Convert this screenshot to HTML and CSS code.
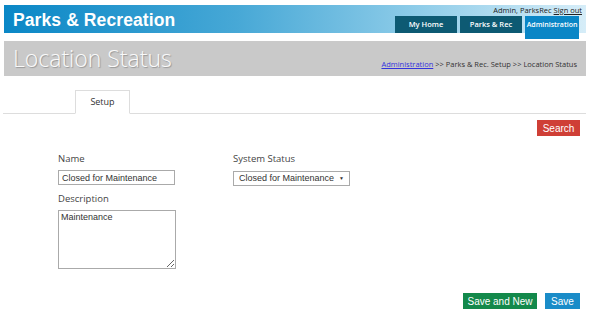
FILE: index.html
```html
<!DOCTYPE html>
<html lang="en">
<head>
  <meta charset="UTF-8">
  <title>Location Status</title>
  <link rel="stylesheet" href="styles.css">
</head>
<body>
  <div class="page">

    <div class="topbar">
      <div class="brand">Parks &amp; Recreation</div>
      <div class="topbar-right">
        <div class="user-line">Admin, ParksRec <a href="#">Sign out</a></div>
        <div class="nav">
          <a class="nav-tab" href="#">My Home</a>
          <a class="nav-tab" href="#">Parks &amp; Rec</a>
          <a class="nav-tab active" href="#">Administration</a>
        </div>
      </div>
    </div>

    <div class="titlebar">
      <h1>Location Status</h1>
      <div class="breadcrumb"><a href="#">Administration</a> &gt;&gt; Parks &amp; Rec. Setup &gt;&gt; Location Status</div>
    </div>

    <div class="tabs">
      <div class="tab">Setup</div>
    </div>

    <div class="toolbar">
      <button class="btn btn-red">Search</button>
    </div>

    <div class="form">
      <div class="form-col">
        <label>Name</label>
        <input type="text" value="Closed for Maintenance">
        <label class="gap">Description</label>
        <textarea>Maintenance</textarea>
      </div>
      <div class="form-col">
        <label>System Status</label>
        <div class="select">Closed for Maintenance <span class="arrow">&#9660;</span></div>
      </div>
    </div>

    <div class="footer-buttons">
      <button class="btn btn-green">Save and New</button>
      <button class="btn btn-blue">Save</button>
    </div>

  </div>
</body>
</html>
```

FILE: styles.css
```css
body {
  margin: 0;
  font-family: 'Open Sans', sans-serif;
  color: #333;
  background: #fff;
}

.page {
  padding: 5px 3px 0 4px;
}

.topbar {
  height: 28px;
  display: flex;
  justify-content: space-between;
  align-items: flex-start;
  background: linear-gradient(to right, #0a87c6, #47a8d6 40%, #8ccbe8 70%, #d6edf8);
}

.brand {
  font-family: 'Liberation Sans', Arial, sans-serif;
  font-weight: bold;
  font-size: 17.5px;
  color: #fff;
  padding: 5px 0 0 9px;
  letter-spacing: 0.1px;
}

.topbar-right {
  display: flex;
  flex-direction: column;
  align-items: flex-end;
  padding-right: 7px;
}

.user-line {
  height: 11px;
  font-size: 7.5px;
  line-height: 11px;
  color: #222;
  margin-right: -3px;
}

.user-line a {
  color: #222;
}

.nav {
  display: flex;
  gap: 3px;
  align-items: flex-start;
}

.nav-tab {
  display: block;
  width: 62px;
  height: 17px;
  line-height: 17px;
  text-align: center;
  font-size: 7.5px;
  font-weight: 600;
  color: #fff;
  text-decoration: none;
  background: #0d5a73;
  box-sizing: border-box;
  white-space: nowrap;
}

.nav-tab.active {
  width: 54px;
  height: 23px;
  background: #0a86c6;
  font-size: 7px;
}

.titlebar {
  margin-top: 8px;
  height: 35px;
  background: #c9c9c9;
  display: flex;
  justify-content: space-between;
  align-items: flex-end;
}

.titlebar h1 {
  margin: 0 0 5px 9px;
  font-weight: 300;
  font-size: 23px;
  line-height: 26px;
  color: #fafafa;
  text-shadow: 1px 1px 1px rgba(0, 0, 0, 0.25);
}

.breadcrumb {
  font-size: 7.5px;
  color: #333;
  margin: 0 9px 7px 0;
}

.breadcrumb a {
  color: #3333dd;
}

.tabs {
  margin: 14px 0 0 -1px;
  border-bottom: 1px solid #ddd;
  display: flex;
}

.tab {
  margin-left: 72px;
  width: 55px;
  height: 24px;
  line-height: 22px;
  border: 1px solid #ddd;
  border-bottom: 1px solid #fff;
  margin-bottom: -1px;
  background: #fff;
  text-align: center;
  font-size: 9px;
  box-sizing: border-box;
}

.toolbar {
  display: flex;
  justify-content: flex-end;
  padding: 6px 6px 0 0;
}

.btn {
  border: none;
  color: #fff;
  font-family: 'Liberation Sans', Arial, sans-serif;
  font-size: 10px;
  height: 16px;
  padding: 0;
  white-space: nowrap;
  cursor: pointer;
}

.btn-red {
  background: #cf3f36;
  width: 43px;
}

.btn-green {
  background: #13894b;
  width: 74px;
}

.btn-blue {
  background: #1a8cc8;
  width: 35px;
}

.form {
  display: flex;
  padding: 17px 0 0 54px;
}

.form-col {
  display: flex;
  flex-direction: column;
  align-items: flex-start;
  width: 175px;
}

.form-col label {
  font-size: 9.5px;
  line-height: 12px;
  color: #444;
  margin-bottom: 5px;
}

.form-col label.gap {
  margin-top: 8px;
  margin-bottom: 5px;
}

input,
textarea,
.select {
  font-family: 'Liberation Sans', Arial, sans-serif;
  font-size: 9px;
  color: #333;
  border: 1px solid #aaa;
  box-sizing: border-box;
  margin: 0;
  background: #fff;
}

input {
  width: 117px;
  height: 15px;
  padding: 0 3px;
}

textarea {
  width: 118px;
  height: 59px;
  padding: 1px 2px;
  resize: vertical;
}

.select {
  width: 117px;
  height: 15px;
  line-height: 13px;
  padding: 0 5px;
  margin-top: 1px;
  display: flex;
  justify-content: space-between;
}

.arrow {
  font-size: 5px;
  color: #333;
}

.footer-buttons {
  display: flex;
  justify-content: flex-end;
  gap: 8px;
  padding: 24px 6px 0 0;
}
```
